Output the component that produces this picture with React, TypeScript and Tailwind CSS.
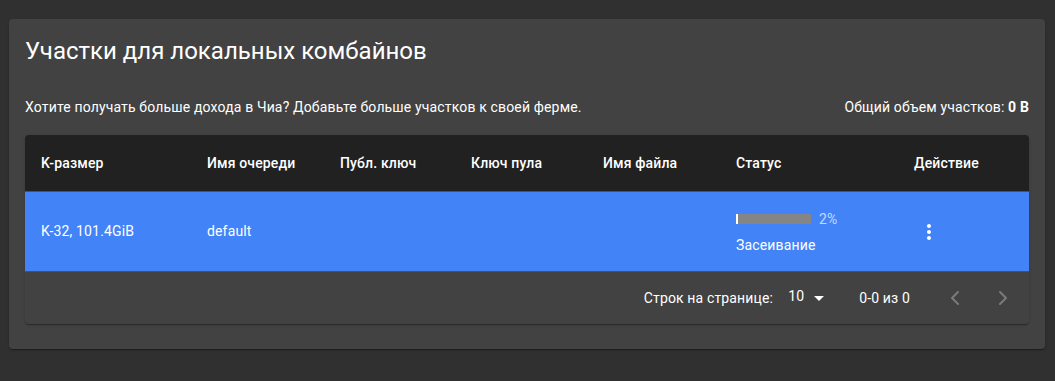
import { ChevronLeft, ChevronRight } from "lucide-react";

const columns = [
  { label: "K-размер", width: "w-[166px]" },
  { label: "Имя очереди", width: "w-[133px]" },
  { label: "Публ. ключ", width: "w-[131px]" },
  { label: "Ключ пула", width: "w-[132px]" },
  { label: "Имя файла", width: "w-[133px]" },
  { label: "Статус", width: "w-[178px]" },
  { label: "Действие", width: "flex-1" },
];

function KebabIcon() {
  return (
    <svg width="24" height="24" viewBox="0 0 24 24" fill="white">
      <path d="M12 8c1.1 0 2-.9 2-2s-.9-2-2-2-2 .9-2 2 .9 2 2 2zm0 2c-1.1 0-2 .9-2 2s.9 2 2 2 2-.9 2-2-.9-2-2-2zm0 6c-1.1 0-2 .9-2 2s.9 2 2 2 2-.9 2-2-.9-2-2-2z" />
    </svg>
  );
}

export default function App() {
  const progress = 2;

  return (
    <div className="w-[1055px] h-[381px] bg-[#303030] pt-[19px] pl-[9px] font-['Roboto',sans-serif] text-white">
      <div className="w-[1036px] h-[330px] bg-[#424242] rounded shadow-[0_2px_1px_-1px_rgba(0,0,0,0.2),0_1px_1px_0_rgba(0,0,0,0.14),0_1px_3px_0_rgba(0,0,0,0.12)] px-4 pt-[16px]">
        <h5 className="text-[24px] leading-[32px] font-normal">
          Участки для локальных комбайнов
        </h5>
        <div className="flex justify-between items-center mt-[30px] text-[14px] leading-[20px] tracking-[0.01071em]">
          <p>Хотите получать больше дохода в Чиа? Добавьте больше участков к своей ферме.</p>
          <p>
            Общий объем участков: <span className="font-bold">0 B</span>
          </p>
        </div>

        <div className="mt-[18px] w-[1004px] rounded overflow-hidden bg-[#424242] shadow-[0_2px_1px_-1px_rgba(0,0,0,0.2),0_1px_1px_0_rgba(0,0,0,0.14),0_1px_3px_0_rgba(0,0,0,0.12)]">
          <div className="flex h-[57px] items-center bg-[#212121] border-b border-[#515151] text-[14px] font-medium tracking-[0.01071em]">
            {columns.map((c) => (
              <div key={c.label} className={`${c.width} px-4`}>
                {c.label}
              </div>
            ))}
          </div>

          <div className="flex h-[80px] items-center bg-[#4283f8] border-b border-[#515151] text-[14px] tracking-[0.01071em]">
            <div className="w-[166px] px-4">K-32, 101.4GiB</div>
            <div className="w-[133px] px-4">default</div>
            <div className="w-[131px] px-4"></div>
            <div className="w-[132px] px-4"></div>
            <div className="w-[133px] px-4"></div>
            <div className="w-[178px] px-4">
              <div className="flex items-center gap-2 mt-[1px]">
                <div className="w-[75px] h-[10px] bg-[#858585]">
                  <div className="h-full bg-white" style={{ width: `${progress}%` }} />
                </div>
                <span className="text-[14px] leading-[20px] text-white/70">{progress}%</span>
              </div>
              <div className="mt-[6px] leading-[20px]">Засеивание</div>
            </div>
            <div className="flex-1 pl-[19px]">
              <KebabIcon />
            </div>
          </div>

          <div className="flex h-[52px] items-center justify-end pr-[14px] text-[14px] tracking-[0.01071em]">
            <span>Строк на странице:</span>
            <span className="ml-[15px] flex items-center">
              <span className="-mt-[3px]">10</span>
              <svg width="24" height="24" viewBox="0 0 24 24" fill="white" className="ml-[3px]">
                <path d="M7 10l5 5 5-5z" />
              </svg>
            </span>
            <span className="ml-[28px]">0-0 из 0</span>
            <div className="ml-[33px] flex items-center gap-[24px] text-white/30">
              <ChevronLeft size={24} strokeWidth={2} />
              <ChevronRight size={24} strokeWidth={2} />
            </div>
          </div>
        </div>
      </div>
    </div>
  );
}
